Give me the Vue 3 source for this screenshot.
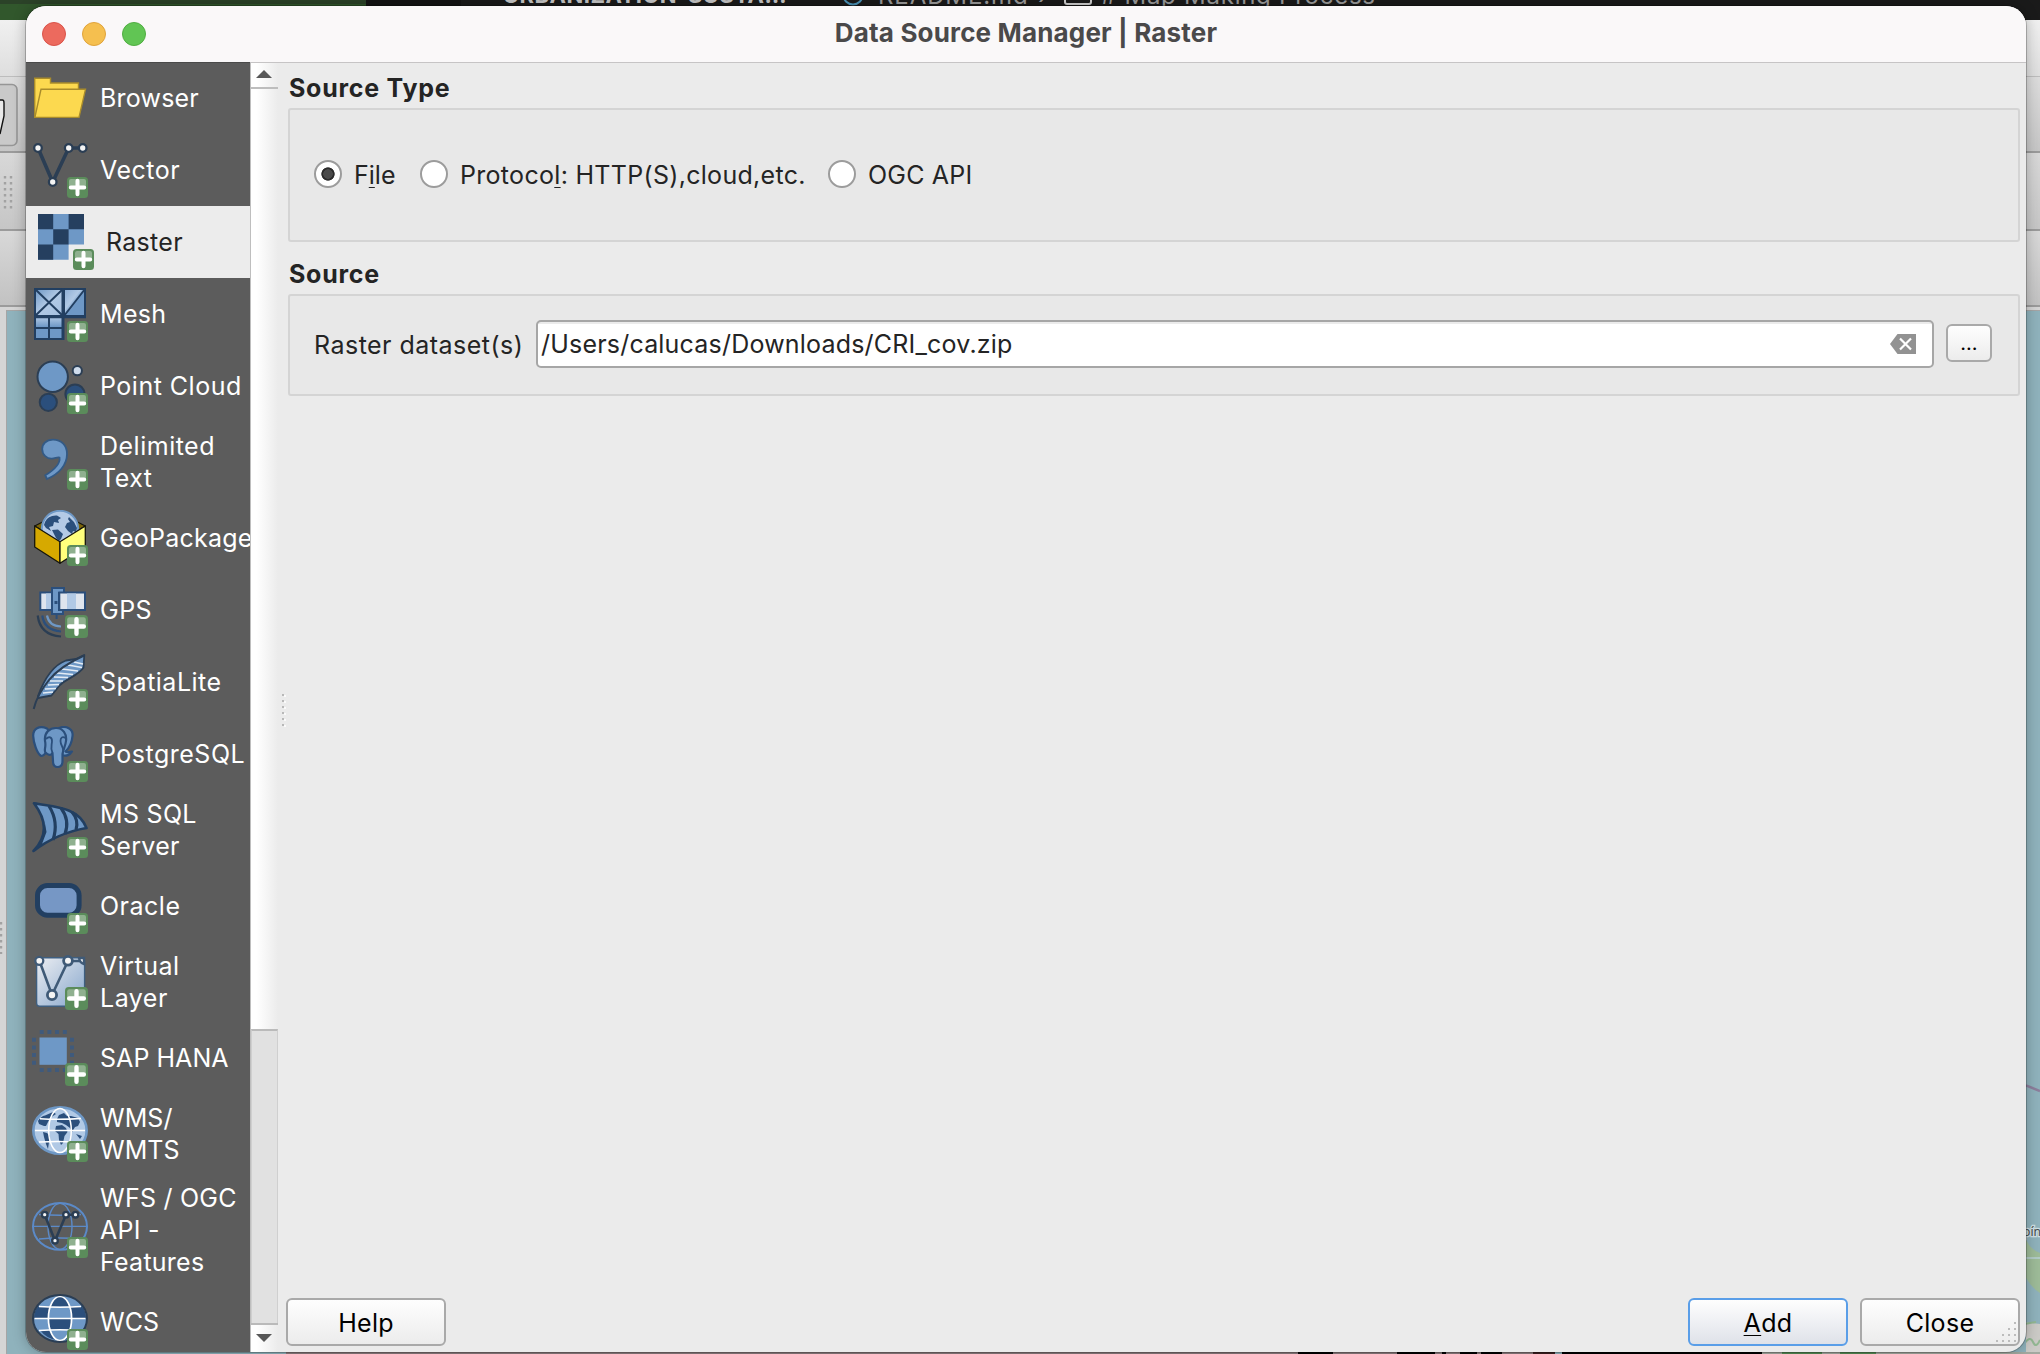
<script setup>
const sources = [
  { label: ['Browser'], icon: 'folder', badge: 0 },
  { label: ['Vector'], icon: 'vector', badge: 21 },
  { label: ['Raster'], icon: 'raster', badge: 21, selected: true },
  { label: ['Mesh'], icon: 'mesh', badge: 21 },
  { label: ['Point Cloud'], icon: 'cloud', badge: 21 },
  { label: ['Delimited', 'Text'], icon: 'comma', badge: 21 },
  { label: ['GeoPackage'], icon: 'gpkg', badge: 21 },
  { label: ['GPS'], icon: 'gps', badge: 23 },
  { label: ['SpatiaLite'], icon: 'feather', badge: 21 },
  { label: ['PostgreSQL'], icon: 'elephant', badge: 21 },
  { label: ['MS SQL', 'Server'], icon: 'mssql', badge: 21 },
  { label: ['Oracle'], icon: 'oracle', badge: 21 },
  { label: ['Virtual', 'Layer'], icon: 'virtual', badge: 23 },
  { label: ['SAP HANA'], icon: 'hana', badge: 23 },
  { label: ['WMS/', 'WMTS'], icon: 'wms', badge: 21 },
  { label: ['WFS / OGC', 'API -', 'Features'], icon: 'wfs', badge: 21 },
  { label: ['WCS'], icon: 'wcs', badge: 21 },
]

const node = (x, y, r = 3.8, c = '#2b3e54', w = 2.3) =>
  `<circle cx="${x}" cy="${y}" r="${r}" fill="#f4f4f4" stroke="${c}" stroke-width="${w}"/>`

const dots = [0, 1, 2, 3]
  .map((i) => {
    const p = 7.7 + i * 7.7
    return `<path d="M${p} 0h4v4h-4zM${p} 38h4v4h-4zM0 ${p}h4v4h-4zM38 ${p}h4v4h-4z"/>`
  })
  .join('')

const icons = {
  folder: `<g stroke="#a98c2b" stroke-width="1.4"><path fill="#fcd94f" d="M2.7 47V8.2H18.5V13H46.5V20L42 47Z"/><path fill="#fcd94f" d="M9 19.3H53.5L47 47.4H2.9Z"/></g>`,
  vector: `<path d="M6 6L20.7 40L36.7 6H50.7" fill="none" stroke="#2b3e54" stroke-width="3.6"/>${node(6, 6)}${node(36.7, 6)}${node(50.7, 6)}${node(20.7, 40)}`,
  raster: `<path fill="#6e98c6" d="M0 0H46V30.5H30.6V45.8H0Z"/><path fill="#253f5f" d="M0 0h15.2v15.2H0zM30.6 0H46v15.2H30.6zM15.2 15.2h15.4v15.3H15.2zM0 30.5h15.2v15.3H0z"/>`,
  mesh: `<g stroke="#223f61" stroke-width="2"><path fill="url(#meshA)" d="M3 3H31V30H3Z"/><path fill="url(#meshB)" d="M32 3H53V30H32Z"/><path fill="url(#meshC)" d="M3 31H31V53H3Z"/><path fill="none" d="M3 3L31 30M31 3L3 30M32 30L53 3M3 42H31M17 31V53"/><path fill="none" stroke-width="3" d="M31 2V54M2 30.7H54"/></g>`,
  cloud: `<g stroke="#2b3e54" stroke-width="2"><circle cx="20.7" cy="18.7" r="15.2" fill="#6e98c6"/><circle cx="45.3" cy="12.7" r="4.6" fill="#cfdcec"/><circle cx="43" cy="36" r="9.6" fill="#2b4f7c"/><circle cx="16.3" cy="44.3" r="8.6" fill="#2b4f7c"/></g>`,
  comma: `<path d="M21 5.7C14 5.7 10.2 10 10.2 15C10.2 21 15 25 20 24.6C23 24.4 26 22.5 27.5 23.5C28.5 30 22 36 13.3 41.3L15 45C27 40 35 31 35 20C35 11 29 5.7 21 5.7Z" fill="#6e98c6" stroke="#335a86" stroke-width="1.8"/>`,
  gpkg: `<g stroke="#15150c" stroke-width="1.3" stroke-linejoin="round"><path fill="#7d6508" d="M2.7 16L28 3L53.3 16L28 31.7Z"/></g><circle cx="28" cy="19" r="18.2" fill="#b4cae6" stroke="#6e98c6" stroke-width="2"/><path fill="#2b4f7c" d="M13 12Q16 5 25 5.500L29 8L26 10L27 13L22 12L21 16L17 17L19 21L14 18L12 15ZM20 20L26 19.500L31 24L29 29L27 31L24 28L22 24ZM33 17L35 13L38 12L36 9L37 7L42 12L45 18L44 22L41 21L40 24L36 21Z"/><g stroke="#15150c" stroke-width="1.3" stroke-linejoin="round"><path fill="#d6a900" d="M2.7 16L28 31.7V53.3L2.7 37Z"/><path fill="#ffff7c" d="M53.3 16L28 31.7V53.3L53.3 37Z"/></g>`,
  gps: `<g stroke="#2b4f7c" stroke-width="2"><path fill="#dfe5ee" d="M8.3 10.5H21V28H8.3Z"/><path fill="#b1c9e5" stroke="none" d="M14 11.5h6V27h-6z"/><path fill="#6e98c6" d="M20 6H32V11H27V28H31V32H20Z"/><path fill="#dfe5ee" d="M27.3 10.5H53V28H27.3Z"/><path fill="#b1c9e5" stroke="none" d="M35 11.5h9V27h-9z"/><path d="M24.6 32V37" /></g><path d="M22.5 19h3v3h-3z" fill="#2b4f7c"/><g fill="none" stroke-width="2.2"><path stroke="#6e98c6" d="M15 33.5Q17 44 29 44.5"/><path stroke="#2b4f7c" d="M10.3 33.5Q12 48 29 49.5"/><path stroke="#2b3e54" d="M5.7 33.5Q8 53 29 54.5"/></g>`,
  feather: `<path fill="#6e98c6" stroke="#2b3e54" stroke-width="1.8" stroke-linejoin="round" d="M6 42C10 31 19 12 34 6.5L44 5L52.3 1L51.5 13.5C47 21 34 25 28 31L19.5 41.5L6 44Z"/><path stroke="#e4ecf5" stroke-width="1.5" d="M11 39L21 38M13 35L24 34.5M16 31L27 30.5M18 27L31 27M22 23L36 23.5M25 19L41 20.5M30 15L46 17M36 11L50 13.5M42 8L51 10"/><path fill="none" stroke="#2b3e54" stroke-width="2" d="M52 1.5C40 7 25 16 17 26C9 36 4 45 1.7 55"/>`,
  elephant: `<g fill="#6e98c6" stroke="#2b4f7c" stroke-width="2.2" stroke-linejoin="round"><path d="M15 2.500C7-1 1 3 1.200 10C1.500 17 5 27 8.500 29.500C11 31 14 27 15 24L20 8Z"/><path d="M27 2C34-1 41.500 3 40.500 10C40 16 37 22 33.500 25.500C34.500 27 38 26 40 25.500C38 29 34 30.500 30.500 29L28 10Z"/><path d="M13 15C12 6 18 2 24 2C31 2 35 8 34 15C33.500 20 31 24 30.500 28V35C30.500 40 27.500 41 25.500 41C22 41 21 38 21 35L20.500 27C19 30 16 29 13.500 26.500C11.500 24 14.500 21 13 15Z"/><path fill="none" stroke-width="1.800" d="M14 13C17 10 20 11 20 15C20 19 18 22 20.500 27M33.500 12C30 10 28.500 12 28.500 15C28.500 20 32 21 31 25"/></g>`,
  mssql: `<path fill="#6e98c6" stroke="#223f61" stroke-width="2.6" stroke-linejoin="round" d="M2 1.2C20 5 46 4 54.5 26C36 29 16 38 1.5 49C17 33 14 17 2 1.2Z"/><path fill="none" stroke="#223f61" stroke-width="3.200" d="M17 4Q27 20 21 38M29 6Q38 18 33 32M40 10Q47 18 44 28"/><path fill="#223f61" d="M1 50Q16 32 12 16L14.500 30L10 42Z"/>`,
  oracle: `<rect x="5.5" y="7.5" width="41.6" height="29.7" rx="10" fill="#7697c5" stroke="#223f61" stroke-width="5"/>`,
  virtual: `<rect x="4.6" y="3.8" width="48" height="48.4" rx="3" fill="url(#virt)" stroke="#3f5f80" stroke-width="1.4"/><path d="M7.5 7L20 41L36 7H50" fill="none" stroke="#3f5a77" stroke-width="2.6"/>${node(7.3, 6.8, 4, '#3f5a77')}${node(36, 6.8, 4.4, '#3f5a77', 2.8)}${node(20, 41, 4.6, '#3f5a77', 2.8)}<path fill="#f4f4f4" stroke="#3f5a77" stroke-width="2.4" d="M52 4H47Q48 9 52 10Z"/>`,
  hana: `<g fill="#3f5a7c">${dots}</g><rect x="7.5" y="7.5" width="27.3" height="27.3" fill="#6e98c6"/>`,
  wms: `<ellipse cx="28" cy="24.5" rx="26.7" ry="23.2" fill="#b1c9e5" stroke="#6e98c6" stroke-width="2.6"/><path fill="#2b4f7c" d="M6 15Q9 10 13 9.500L21 6L24 8L18 12L16 16L14 20L12 20L7 18ZM11 26L15 27L18 30L17 36L16 43L14 38L12 31ZM24 20L30 19L34 22L35.500 26L32.500 30L31 37L29 39L27 34L26.500 28L23 25ZM25 13L27 9L32 7L35 10L39 10L46 12L48 16L46 20L43 21L40 26L38 22L34 19L30 17L25 16ZM44 28L50 30L48 33Z"/><g fill="none" stroke="#fff" stroke-width="1.5"><ellipse cx="28" cy="24.5" rx="11.3" ry="22"/><path d="M3 24.5H53M8 12.8Q28 14 49 12.5M7 36Q28 35 40 36"/></g>`,
  wfs: `<g fill="none" stroke="#5b8ac8"><ellipse cx="28" cy="24.4" rx="27" ry="23.4" stroke-width="2"/><ellipse cx="28" cy="24.4" rx="12" ry="23" stroke-width="1.4"/><path stroke-width="1.4" d="M1 24.4H55M7 12.5Q28 14 49 12.5M7 37Q28 35 49 37"/></g><path d="M12.7 12.7L23 38.7L34 12.7H43.5" fill="none" stroke="#2b3e54" stroke-width="2.6"/>${node(12.7, 12.7, 2.8)}${node(34, 12.7, 2.8)}${node(43.5, 12.7, 2.8)}${node(23, 38.7, 2.8)}`,
  wcs: `<ellipse cx="28" cy="24.5" rx="26.9" ry="23.4" fill="#6e98c6"/><path fill="#2b4f7c" d="M18 12.5Q22 2 28 2Q34 2 38 12.5ZM2 24.5Q2 17 6 12.5H18L16.5 24.5ZM39.5 24.5L38 12.5H50Q54 17 54 24.5ZM16.5 24.5H39.5L38 36H18ZM8 36H18L24 46Q14 44 8 36ZM38 36H48L42 43L33 46Z"/><g fill="none" stroke="#fff" stroke-width="1.7"><ellipse cx="28" cy="24.5" rx="11.6" ry="22"/><path d="M2.5 24.5H53.5M7 12.5Q28 14 49 12.5M7 36.5Q28 35 49 36.5"/></g><ellipse cx="28" cy="24.5" rx="27" ry="23.5" fill="none" stroke="#2b3e54" stroke-width="2"/>`,
}
</script>

<template>
  <div class="desktop">
    <div class="topstrip">
      <div class="green"></div>
      <span class="tab-a">URBANIZATION-SUSTA…</span>
      <svg class="crumb-dot" width="24" height="24"><circle cx="12" cy="12" r="9.5" fill="none" stroke="#4a93b8" stroke-width="2" /><path d="M8 16h8" stroke="#4a93b8" stroke-width="2" /></svg>
      <span class="tab-b">README.md</span>
      <span class="tab-sep">›</span>
      <span class="tab-box"></span>
      <span class="tab-c"># Map Making Process</span>
    </div>
    <div class="backwin">
      <div class="bar bar1"></div>
      <div class="bar bar2"></div>
      <div class="bar bar3"></div>
      <div class="bar bar4"></div>
      <div class="mapwrap"></div>
      <svg class="over" width="26" height="1334" viewBox="0 20 26 1334">
        <rect x="-20" y="84.5" width="37" height="61" rx="5" fill="#c9c9c9" stroke="#969696" stroke-width="1.6" />
        <path d="M-2 100H2.500Q4 100 4 103V116L0 134" fill="#e9e9e9" stroke="#111" stroke-width="1.4" />
        <g stroke="#a2a2a2" stroke-width="2.400" stroke-dasharray="2.400 3.600"><path d="M5 176V209M11 176V209M1 922V954" /></g>
      </svg>
      <svg class="over right" width="14" height="334" viewBox="2026 1020 14 334">
        <path d="M2026 1085.500L2040 1091" stroke="#8c7f9c" stroke-width="2.500" />
        <path d="M2026 1240Q2031 1250 2040 1253V1293Q2032 1288 2026 1278Z" fill="#9dbb98" />
        <path d="M2026 1258H2040" stroke="#b9d0d6" stroke-width="1.500" />
        <path d="M2022 1322L2040 1324V1354H2000V1322Z" fill="#cbcac6" />
        <path d="M2024 1344Q2030 1335 2033 1342T2040 1340" fill="none" stroke="#92b792" stroke-width="2" />
        <path d="M2024 1324L2036 1322" stroke="#92b792" stroke-width="2" />
        <text x="2023" y="1236" font-size="12" font-family="Noto Sans, sans-serif" fill="#454a4c" stroke="#cfe0e4" stroke-width="2.500" paint-order="stroke">pín</text>
      </svg>
      <svg class="over bottom" width="2014" height="2" viewBox="26 0 2014 2">
        <path fill="#8b7c7e" d="M286 0h1260v2H286z" />
        <path fill="#000" d="M1298 0h35v2h-35zM1397 0h38v2h-38zM1442 0h4v2h-4zM1460 0h17v2h-17zM1481 0h21v2h-21zM1562 0h200v2h-200z" />
        <path fill="#3b1f1f" d="M1533 0h22v2h-22z" />
        <path fill="#a3a9a0" d="M1762 0h278v2h-278z" />
        <path fill="#548a54" d="M1782 0h40v2h-40zM1840 0h36v2h-36z" />
      </svg>
    </div>

    <div class="window">
      <header class="titlebar">
        <div class="lights"><i class="red"></i><i class="amber"></i><i class="lime"></i></div>
        <span class="title">Data Source Manager | Raster</span>
      </header>
      <div class="body">
        <svg width="0" height="0" class="defs">
          <defs>
            <linearGradient id="meshA" x1="0" y1="0" x2="1" y2="1"><stop offset="0" stop-color="#6e98c6" /><stop offset=".5" stop-color="#b1c9e5" /><stop offset="1" stop-color="#a4bfdf" /></linearGradient>
            <linearGradient id="meshB" x1="0" y1="0" x2="1" y2="1"><stop offset="0" stop-color="#8bacd3" /><stop offset=".4" stop-color="#b1c9e5" /><stop offset=".55" stop-color="#6e98c6" /></linearGradient>
            <linearGradient id="meshC" x1="0" y1="0" x2="0" y2="1"><stop offset="0" stop-color="#b1c9e5" /><stop offset=".45" stop-color="#6e98c6" /></linearGradient>
            <linearGradient id="virt" x1="0" y1="0" x2="1" y2="1"><stop offset="0" stop-color="#eceef2" /><stop offset="1" stop-color="#86a6cc" /></linearGradient>
          </defs>
        </svg>
        <nav class="sidebar">
          <div v-for="s in sources" :key="s.icon" class="item" :class="[s.icon, { selected: s.selected }]">
            <svg class="icon" width="56" height="56" viewBox="0 0 56 56">
              <g v-html="icons[s.icon]"></g>
              <svg v-if="s.badge" :x="56 - s.badge" :y="56 - s.badge" :width="s.badge" :height="s.badge" viewBox="0 0 21 21">
                <rect width="21" height="21" rx="3.500" fill="#5b8c5b" />
                <path d="M2 10.500V4Q2 2 4 2H17Q19 2 19 4V10.500Z" fill="#8fb08f" />
                <path d="M10.500 3.800V17.200M3.800 10.500H17.200" stroke="#fff" stroke-width="4" stroke-linecap="round" />
              </svg>
            </svg>
            <div class="label"><div v-for="l in s.label" :key="l">{{ l }}</div></div>
          </div>
        </nav>
        <div class="scrollbar">
          <div class="sb-btn up"><svg width="16" height="8"><path d="M0 8L8 0L16 8Z" fill="#575757" /></svg></div>
          <div class="thumb"></div>
          <div class="groove"></div>
          <div class="sb-btn down"><svg width="16" height="8"><path d="M0 0L8 8L16 0Z" fill="#575757" /></svg></div>
        </div>
        <div class="splitter"><i v-for="n in 6" :key="n"></i></div>
        <main class="main">
          <h2 class="h-type">Source Type</h2>
          <section class="group type">
            <span class="radio on"></span><span class="t-file">F<u>i</u>le</span>
            <span class="radio r2"></span><span class="t-proto">Protoco<u>l</u>: HTTP(S),cloud,etc.</span>
            <span class="radio r3"></span><span class="t-ogc">OGC API</span>
          </section>
          <h2 class="h-source">Source</h2>
          <section class="group source">
            <label class="ds">Raster dataset(s)</label>
            <div class="field">
              <span class="path">/Users/calucas/Downloads/CRI_cov.zip</span>
              <svg width="26" height="20" viewBox="0 0 26 20"><path d="M0 10L7.500 0H26V20H7.500Z" fill="#929292" /><path d="M10 4.500L21 15.500M21 4.500L10 15.500" stroke="#fff" stroke-width="2.200" /></svg>
            </div>
            <button class="more">...</button>
          </section>
          <footer class="footer">
            <button class="btn help">Help</button>
            <button class="btn add"><u>A</u>dd</button>
            <button class="btn close">Close
              <svg class="grip" width="22" height="22"><path fill="#bcbcbc" d="M18 0h2v2h-2zM18 6h2v2h-2zM12 6h2v2h-2zM18 12h2v2h-2zM12 12h2v2h-2zM6 12h2v2h-2zM18 18h2v2h-2zM12 18h2v2h-2zM6 18h2v2h-2zM0 18h2v2h-2z" /></svg>
            </button>
          </footer>
        </main>
      </div>
    </div>
  </div>
</template>

<style>
body { margin: 0; overflow: hidden; }
</style>

<style scoped>
.desktop { position: relative; width: 2040px; height: 1354px; overflow: hidden; background: #171717; font-family: Inter, "Liberation Sans", sans-serif; font-size: 25px; color: #242424; }
.topstrip { position: absolute; inset: 0 0 auto 0; height: 20px; overflow: hidden; background: #1a1a1a; }
.topstrip > * { position: absolute; white-space: nowrap; line-height: 24px; }
.green { left: 0; top: 0; width: 366px; height: 20px; background: linear-gradient(#2b4228 0 4px, #31572c 4px); border-right: 95px solid #141414; }
.tab-a { left: 503px; top: -17px; font-size: 22px; font-weight: 700; color: #c5c5c5; letter-spacing: .5px; }
.crumb-dot { left: 841px; top: -17px; }
.tab-b { left: 878px; top: -16px; font-size: 24px; color: #9b9b9b; letter-spacing: .9px; }
.tab-sep { left: 1038px; top: -16px; font-size: 24px; color: #9b9b9b; }
.tab-box { left: 1064px; top: -14px; width: 24px; height: 15px; border: 2px solid #d0d0d0; border-radius: 3px; }
.tab-c { left: 1101px; top: -16px; font-size: 24px; color: #9b9b9b; letter-spacing: .75px; }
.backwin { position: absolute; inset: 20px 0 0 0; display: flex; flex-direction: column; background: #d5d5d5; }
.bar { box-sizing: border-box; border-bottom: 2px solid #9b9b9b; }
.bar1 { height: 57px; background: linear-gradient(#f0f0f0, #dedede); border-bottom: 1px solid #bdbdbd; }
.bar2 { height: 76px; background: linear-gradient(#dcdcdc, #c6c6c6); }
.bar3 { height: 78px; background: linear-gradient(#d8d8d8, #c6c6c6); }
.bar4 { height: 76px; background: linear-gradient(#d8d8d8, #c2c2c2); }
.mapwrap { flex: 1; margin: 3px 0 0 6px; border: solid #a5a5a5; border-width: 1px 0 0 1px; background: #8fb2bc; }
.over { position: absolute; left: 0; top: 0; }
.over.right { left: 2026px; top: 1000px; }
.over.bottom { left: 26px; top: 1332px; }
.window { position: absolute; left: 26px; top: 6px; width: 2000px; height: 1346px; border-radius: 20px; overflow: hidden; display: flex; flex-direction: column; background: #ebebeb; }
.window { box-shadow: 0 0 0 1px rgba(0,0,0,.22), 0 0 14px rgba(0,0,0,.28); }
.titlebar { box-sizing: border-box; height: 57px; flex: none; display: flex; align-items: center; background: #faf8f9; border-bottom: 1px solid #c6c4c5; padding: 0 16px; }
.lights { display: flex; gap: 16px; width: 0; }
.lights i { flex: none; box-sizing: border-box; width: 24px; height: 24px; border-radius: 50%; }
.red { background: #ec6a5e; border: 1px solid #d9534a; }
.amber { background: #f5bf4f; border: 1px solid #dfa33c; }
.lime { background: #61c554; border: 1px solid #50ad42; }
.title { flex: 1; text-align: center; font-weight: 700; font-size: 26px; color: #4a494a; letter-spacing: .16px; padding-bottom: 3px; }
.body { flex: 1; min-height: 0; display: flex; }
.defs { position: absolute; }
.sidebar { width: 224px; flex: none; overflow: hidden; background: #5c5c5c; color: #fff; margin-top: -1px; border-top: 1px solid #4a4a4a; box-sizing: border-box; }
.item { box-sizing: border-box; display: flex; align-items: center; padding: 8px 0 8px 6px; height: 72px; letter-spacing: .5px; }
.item.folder { margin-top: -1px; letter-spacing: .2px; }
.item.raster, .item.mesh, .item.mssql { letter-spacing: .3px; }
.item.gpkg, .item.wfs { letter-spacing: .25px; }
.item.hana, .item.wms, .item.wcs { letter-spacing: .05px; }
.item.comma, .item.mssql, .item.virtual, .item.wms { height: 80px; }
.item.wfs { height: 112px; }
.item.selected { background: #ececec; color: #242424; padding-left: 12px; }
.icon { flex: none; margin-right: 12px; }
.label { white-space: nowrap; line-height: 32px; }
.scrollbar { width: 28px; flex: none; display: flex; flex-direction: column; box-sizing: border-box; border-left: 1px solid #bebebe; background: linear-gradient(90deg, #fff 20%, #ebebeb); }
.sb-btn { display: flex; justify-content: center; box-sizing: border-box; padding-right: 2px; }
.up { height: 26px; padding-top: 7px; border-bottom: 2px solid #bdbdbd; }
.thumb { height: 940px; }
.groove { flex: 1; box-sizing: border-box; background: #e1e1e1; border: solid #cfcfcf; border-width: 2px 1px 0; border-top-color: #bababa; }
.down { height: 29px; padding-top: 9px; border-top: 2px solid #bababa; background: linear-gradient(90deg, #fff 20%, #ebebeb); }
.splitter { width: 8px; flex: none; display: flex; flex-direction: column; gap: 4px; padding: 631px 0 0 4px; box-sizing: border-box; }
.splitter i { width: 2px; height: 2px; background: #b8b8b8; box-shadow: 2px 1px 0 #fafafa; }
.main { flex: 1; display: flex; flex-direction: column; padding: 0 6px 6px 2px; min-width: 0; }
h2 { margin: 0 0 0 1px; font-size: 25px; line-height: 32px; font-weight: 700; color: #242424; letter-spacing: .75px; }
.h-type { padding-top: 9px; }
.h-source { margin-top: 16px; }
.group { box-sizing: border-box; border: 2px solid #d4d4d4; border-radius: 3px; background: #e8e8e8; display: flex; align-items: center; white-space: nowrap; }
.type { height: 134px; margin-top: 4px; padding: 0 0 2px 24px; }
.source { height: 102px; margin-top: 4px; padding: 0 26px 0 24px; }
.radio { box-sizing: border-box; width: 28px; height: 28px; border: 2px solid #9c9c9c; border-radius: 50%; background: #fff; flex: none; }
.radio.on { background: radial-gradient(circle, #4a4a4a 0 4.500px, #2c2c2c 5px 6.300px, #fff 7px); }
.t-file, .t-proto, .t-ogc { padding-top: 2px; }
.t-file { width: 66px; margin-left: 12px; }
.t-proto { width: 368px; margin-left: 12px; letter-spacing: .3px; }
.t-ogc { margin-left: 12px; letter-spacing: .2px; }
u { text-decoration-thickness: 1px; text-underline-offset: 3px; text-decoration-skip-ink: none; }
.ds { width: 222px; letter-spacing: .48px; }
.field { box-sizing: border-box; flex: 1; height: 48px; margin: -2px 12px 0 0; border: 2px solid #a6a6a6; border-radius: 5px; background: linear-gradient(#ebebeb 0 2px, #fff 2px); display: flex; align-items: center; justify-content: space-between; padding: 0 16px 0 3px; }
.path { letter-spacing: .2px; }
button { font: inherit; color: #000; padding: 0; box-sizing: border-box; border: 2px solid #a9a9a9; border-radius: 6px; background: linear-gradient(#fefefe, #ececec); }
.more { width: 46px; height: 38px; font-size: 20px; line-height: 20px; margin-top: -4px; }
.footer { margin-top: auto; display: flex; margin-left: -2px; gap: 12px; }
.btn { position: relative; width: 160px; height: 48px; padding-top: 2px; letter-spacing: .3px; }
.help { margin-right: auto; }
.add { border-color: #5a9ee8; background: linear-gradient(#fefefe, #dfe2e9); }
.grip { position: absolute; right: 0; bottom: 0; }
</style>
